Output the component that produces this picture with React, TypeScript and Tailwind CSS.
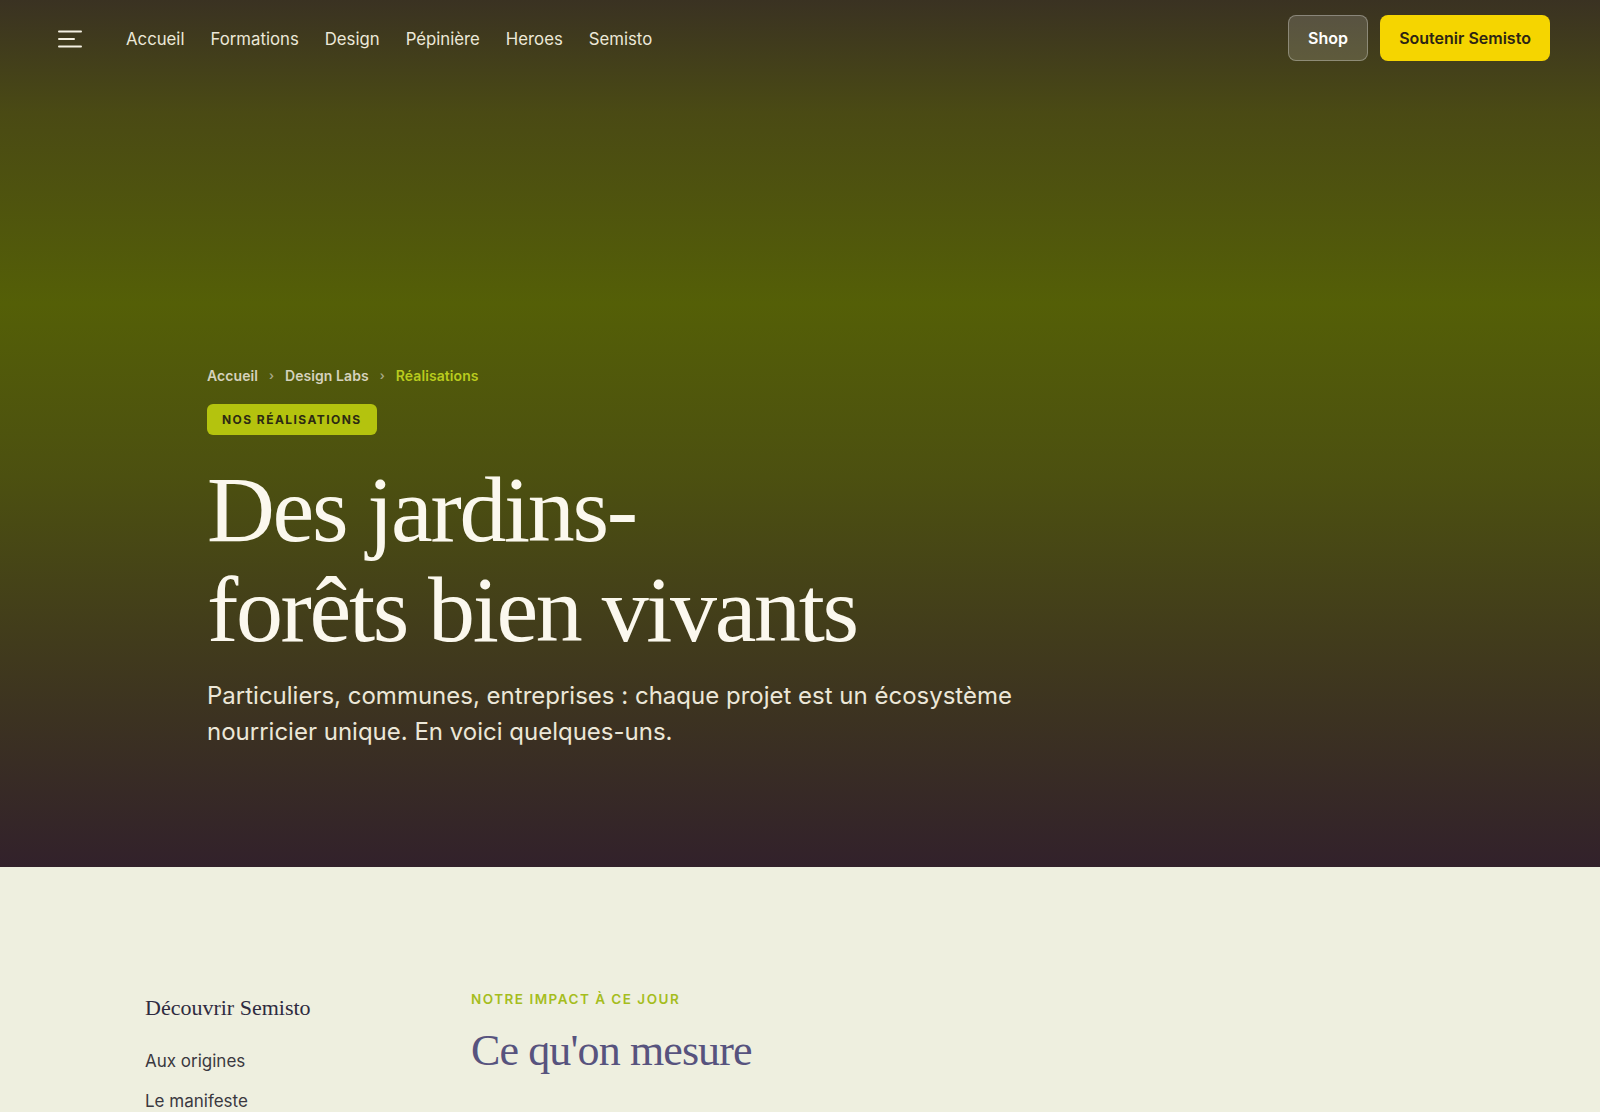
const sans = "font-['Inter','Noto_Sans',sans-serif]";
const serif = "font-['Liberation_Serif','DejaVu_Serif',serif]";

const navLinks = ["Accueil", "Formations", "Design", "Pépinière", "Heroes", "Semisto"];
const sideLinks = ["Aux origines", "Le manifeste", "L'équipe", "Nos partenaires"];

function MenuIcon() {
  return (
    <svg width="24" height="24" viewBox="0 0 24 24" fill="none" stroke="currentColor" strokeWidth="2" strokeLinecap="round" className="block">
      <line x1="1" y1="4.5" x2="23" y2="4.5" />
      <line x1="1" y1="12" x2="16" y2="12" />
      <line x1="1" y1="19.5" x2="23" y2="19.5" />
    </svg>
  );
}

function Header() {
  return (
    <header className="flex items-center justify-between px-[50px] py-[15px]">
      <div className="flex items-center">
        <button className="p-2 pt-[9px] text-[#f4f0e2]" aria-label="Menu">
          <MenuIcon />
        </button>
        <nav className="ml-9 flex items-center gap-[26px] pt-[3px]">
          {navLinks.map((l) => (
            <a key={l} href="#" className="text-[16.75px] font-normal text-[#ece8d8]">
              {l}
            </a>
          ))}
        </nav>
      </div>
      <div className="flex items-center gap-3">
        <a
          href="#"
          className="flex h-[46px] w-[80px] items-center justify-center rounded-lg border border-white/30 bg-white/15 text-[16px] font-semibold text-white"
        >
          Shop
        </a>
        <a
          href="#"
          className="flex h-[46px] w-[170px] items-center justify-center rounded-lg bg-[#f5d500] text-[16px] font-semibold text-[#2c2414]"
        >
          Soutenir Semisto
        </a>
      </div>
    </header>
  );
}

function Hero() {
  return (
    <section className="h-[867px] bg-[linear-gradient(180deg,#3a3222_0%,#4a4a14_13%,#545f07_35%,#4c5010_55%,#40391d_76%,#32212b_100%)]">
      <Header />
      <div className="pl-[207px] pt-[290px]">
        <div className="flex items-center gap-[11px] text-[14px] font-semibold leading-5 tracking-[0.005em]">
          <a href="#" className="text-[#d5d2bd]">Accueil</a>
          <span className="text-[12px] text-[#a9a98a]">›</span>
          <a href="#" className="text-[#d5d2bd]">Design Labs</a>
          <span className="text-[12px] text-[#a9a98a]">›</span>
          <span className="text-[#b9cb1e]">Réalisations</span>
        </div>
        <div className="mt-[18px] inline-flex h-[31px] items-center rounded-md bg-[#b4c30e] px-[15px] text-[12px] font-bold tracking-[0.12em] text-[#2c2a12]">
          NOS RÉALISATIONS
        </div>
        <h1 className={`${serif} mt-6 text-[94px] leading-[100px] tracking-[-0.025em] text-[#fbf8ee]`}>
          Des jardins-
          <br />
          forêts bien vivants
        </h1>
        <p className="mt-[19px] max-w-[830px] text-[24px] leading-9 text-[#ece7d8]">
          Particuliers, communes, entreprises : chaque projet est un écosystème nourricier unique. En voici quelques-uns.
        </p>
      </div>
    </section>
  );
}

function Impact() {
  return (
    <section className="flex bg-[#eeefdf] px-[145px] pb-24 pt-[124px]">
      <aside className="w-[326px] shrink-0">
        <h3 className={`${serif} pt-[3px] text-[22px] leading-7 text-[#2e2b40]`}>Découvrir Semisto</h3>
        <ul className="mt-[27px] flex flex-col gap-[16px]">
          {sideLinks.map((l) => (
            <li key={l}>
              <a href="#" className="text-[17px] leading-6 text-[#3a3840]">
                {l}
              </a>
            </li>
          ))}
        </ul>
      </aside>
      <div className="flex-1">
        <p className="-mt-[2px] text-[13.5px] font-semibold leading-5 tracking-[0.11em] text-[#a5bd1d]">NOTRE IMPACT À CE JOUR</p>
        <h2 className={`${serif} mt-[14px] text-[44px] leading-[56px] tracking-[-0.02em] text-[#57537e]`}>
          Ce qu'on mesure
        </h2>
      </div>
    </section>
  );
}

export default function App() {
  return (
    <div className={`${sans} min-h-screen bg-[#eeefdf]`}>
      <Hero />
      <Impact />
    </div>
  );
}
